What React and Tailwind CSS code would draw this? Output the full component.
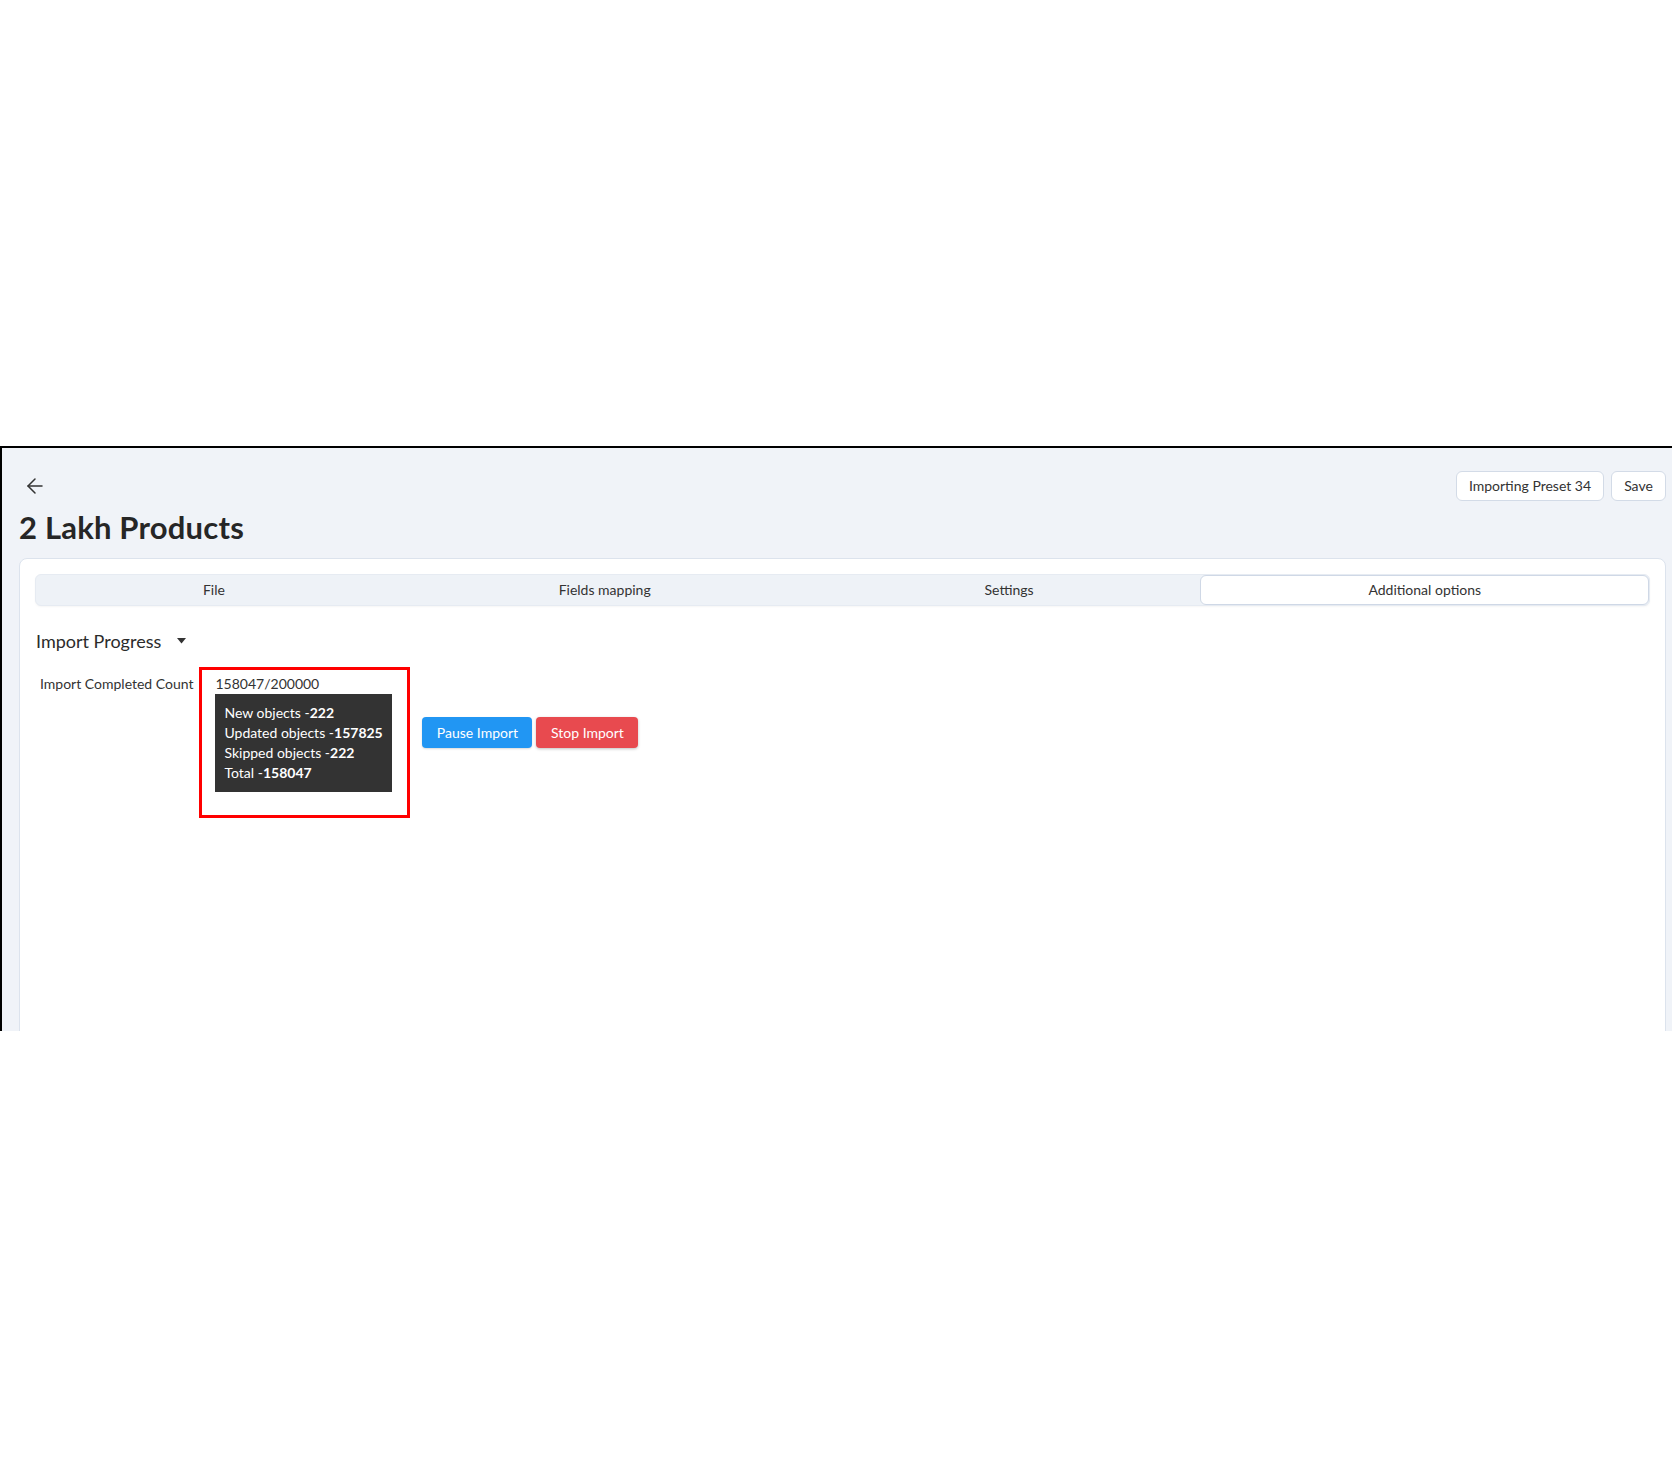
import React from "react";
import { ArrowLeft } from "lucide-react";

const tabs = ["File", "Fields mapping", "Settings", "Additional options"];

const stats = [
  { label: "New objects", value: "222" },
  { label: "Updated objects", value: "157825" },
  { label: "Skipped objects", value: "222" },
  { label: "Total", value: "158047" },
];

const App = () => {
  return (
    <div className="min-h-screen bg-white font-['Lato','Open_Sans',sans-serif] text-[#333]">
      <div className="h-[446px]" />

      <div className="h-[585px] overflow-hidden border-t-2 border-l-2 border-black bg-[#f0f3f8]">
        {/* header */}
        <div className="flex items-center justify-between pl-[16px] pr-[6px] pt-[23px]">
          <button className="px-[5px] text-[#333]">
            <ArrowLeft size={24} strokeWidth={1.5} />
          </button>
          <div className="flex gap-[7px]">
            <button className="h-[30px] w-[148px] rounded-md border border-[#d3dbe7] bg-white text-sm text-[#333]">
              Importing Preset 34
            </button>
            <button className="h-[30px] w-[55px] rounded-md border border-[#d3dbe7] bg-white text-sm text-[#333]">
              Save
            </button>
          </div>
        </div>

        <h1 className="ml-[17px] mt-[8px] text-[31px] font-bold leading-[36px] tracking-[0.2px] text-[#262626]">
          2 Lakh Products
        </h1>

        {/* card */}
        <div className="ml-[17px] mr-[6px] mt-[13px] h-[600px] rounded-lg border border-[#dce3ed] bg-white px-[15px] pt-[15px]">
          <div className="flex h-[32px] rounded-md border border-[#e6ebf2] bg-[#eef2f7] shadow-[0_1px_2px_rgba(0,0,0,0.04)]">
            {tabs.map((tab, idx) => {
              const active = idx === tabs.length - 1;
              return (
                <div
                  key={tab}
                  className={`flex flex-auto items-center justify-center rounded-md text-sm ${
                    active ? "border border-[#cfd8e6] bg-white" : ""
                  }`}
                >
                  {tab}
                </div>
              );
            })}
          </div>

          <div className="mt-[24px] flex items-center gap-[16px] pl-[1px]">
            <span className="text-[18px] leading-[22px] text-[#2b2b2b]">Import Progress</span>
            <svg width="9" height="6" viewBox="0 0 9 6">
              <polygon points="0,0 9,0 4.5,5.5" fill="#333" />
            </svg>
          </div>

          <div className="mt-[15px] flex items-start">
            <span className="ml-[5px] mt-[7px] text-sm leading-5">Import Completed Count</span>

            <div className="ml-[6px] w-[211px] border-[3px] border-[#ff0000] pb-[23px] pl-[13px] pt-[4px]">
              <div className="text-sm leading-5">158047/200000</div>
              <div className="inline-block bg-[#333] px-[9px] py-[9px] text-sm leading-5 text-white">
                {stats.map((s) => (
                  <div key={s.label}>
                    {s.label} -<span className="font-bold">{s.value}</span>
                  </div>
                ))}
              </div>
            </div>

            <div className="ml-[12px] mt-[50px] flex gap-[4px]">
              <button className="h-[31px] w-[110px] rounded bg-[#2196f3] text-sm text-white shadow-[0_1px_2px_rgba(0,0,0,0.15)]">
                Pause Import
              </button>
              <button className="h-[31px] w-[102px] rounded bg-[#e84a4f] text-sm text-white shadow-[0_1px_3px_rgba(0,0,0,0.25)]">
                Stop Import
              </button>
            </div>
          </div>
        </div>
      </div>
    </div>
  );
};

export default App;
